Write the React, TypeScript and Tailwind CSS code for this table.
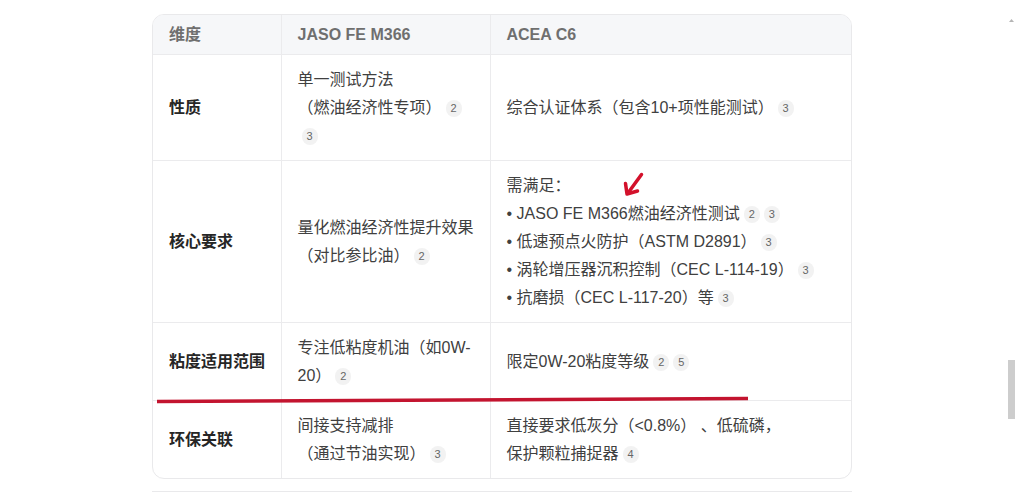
import React from "react";

const Cite = ({ n }: { n: number }) => (
  <span className="ml-[4px] inline-flex h-[17px] min-w-[16px] items-center justify-center rounded-[8px] bg-[#f2f2f2] px-[4px] align-[1px] text-[11px] leading-none text-[#666]">
    {n}
  </span>
);

const rows = [
  {
    dim: "性质",
    jaso: (
      <>
        单一测试方法
        <br />
        （燃油经济性专项）
        <Cite n={2} />
        <br />
        <Cite n={3} />
      </>
    ),
    acea: (
      <>
        综合认证体系（包含10+项性能测试）
        <Cite n={3} />
      </>
    ),
  },
  {
    dim: "核心要求",
    jaso: (
      <>
        量化燃油经济性提升效果
        <br />
        （对比参比油）
        <Cite n={2} />
      </>
    ),
    acea: (
      <>
        需满足：
        <br />• JASO FE M366燃油经济性测试
        <Cite n={2} />
        <Cite n={3} />
        <br />• 低速预点火防护（ASTM D2891）
        <Cite n={3} />
        <br />• 涡轮增压器沉积控制（CEC L-114-19）
        <Cite n={3} />
        <br />• 抗磨损（CEC L-117-20）等
        <Cite n={3} />
      </>
    ),
  },
  {
    dim: "粘度适用范围",
    jaso: (
      <>
        专注低粘度机油（如0W-
        <br />
        20）
        <Cite n={2} />
      </>
    ),
    acea: (
      <>
        限定0W-20粘度等级
        <Cite n={2} />
        <Cite n={5} />
      </>
    ),
  },
  {
    dim: "环保关联",
    jaso: (
      <>
        间接支持减排
        <br />
        （通过节油实现）
        <Cite n={3} />
      </>
    ),
    acea: (
      <>
        直接要求低灰分（&lt;0.8%）&nbsp;、低硫磷，
        <br />
        保护颗粒捕捉器
        <Cite n={4} />
      </>
    ),
  },
];

export default function App() {
  return (
    <div
      className="relative h-[493px] w-[1015px] overflow-hidden bg-white"
      style={{ fontFamily: '"Liberation Sans", "Noto Sans CJK SC", sans-serif' }}
    >
      <div className="ml-[152px] w-[700px] pt-[14px]">
        <div className="overflow-hidden rounded-[12px] border border-[#e9e9eb]">
          <table className="w-full table-fixed border-collapse text-[16px] leading-[28px]">
            <colgroup>
              <col className="w-[128px]" />
              <col className="w-[209px]" />
              <col />
            </colgroup>
            <thead>
              <tr className="bg-[#f6f7f9] text-left text-[#6f6f6f]">
                <th className="border-r border-b border-[#ebebed] pl-4 pr-[12px] pt-[6px] pb-[5px] font-bold">维度</th>
                <th className="border-r border-b border-[#ebebed] pl-4 pr-[12px] pt-[6px] pb-[5px] font-bold">JASO FE M366</th>
                <th className="border-b border-[#ebebed] pl-4 pr-[12px] pt-[6px] pb-[5px] font-bold">ACEA C6</th>
              </tr>
            </thead>
            <tbody>
              {rows.map((r, i) => (
                <tr key={r.dim} className={i < rows.length - 1 ? "border-b border-[#ebebed]" : ""}>
                  <td className="border-r border-[#ebebed] pl-4 pr-[8px] pt-[11px] pb-[10px] align-middle font-bold text-[#262626]">
                    {r.dim}
                  </td>
                  <td className="border-r border-[#ebebed] pl-4 pr-[8px] pt-[11px] pb-[10px] align-middle text-[#404040]">
                    {r.jaso}
                  </td>
                  <td className="pl-4 pr-[8px] pt-[11px] pb-[10px] align-middle text-[#404040]">{r.acea}</td>
                </tr>
              ))}
            </tbody>
          </table>
        </div>
        <div className="mt-[12px] border-t border-[#e9e9eb]" />
      </div>

      {/* hand-drawn annotations */}
      <svg className="pointer-events-none absolute inset-0" width="1015" height="493">
        <line x1="641.5" y1="174.5" x2="628" y2="193" stroke="#d3112b" strokeWidth="3.5" strokeLinecap="round" />
        <polyline points="625.5,183.5 627,194 637.5,191" fill="none" stroke="#d3112b" strokeWidth="3.5" strokeLinecap="round" strokeLinejoin="round" />
        <line x1="157" y1="401.5" x2="748" y2="398.5" stroke="#c3142f" strokeWidth="3.5" />
      </svg>

      {/* scrollbar */}
      <div className="absolute right-0 top-0 flex h-full w-[7px] flex-col items-center">
        <svg className="mt-[18px]" width="7" height="5" viewBox="0 0 7 5">
          <path d="M3.5 1 L6 4 L1 4 Z" fill="#b5b5b5" />
        </svg>
        <div className="mt-[337px] h-[59px] w-[7px] bg-[#cdcdcd]" />
      </div>
    </div>
  );
}
